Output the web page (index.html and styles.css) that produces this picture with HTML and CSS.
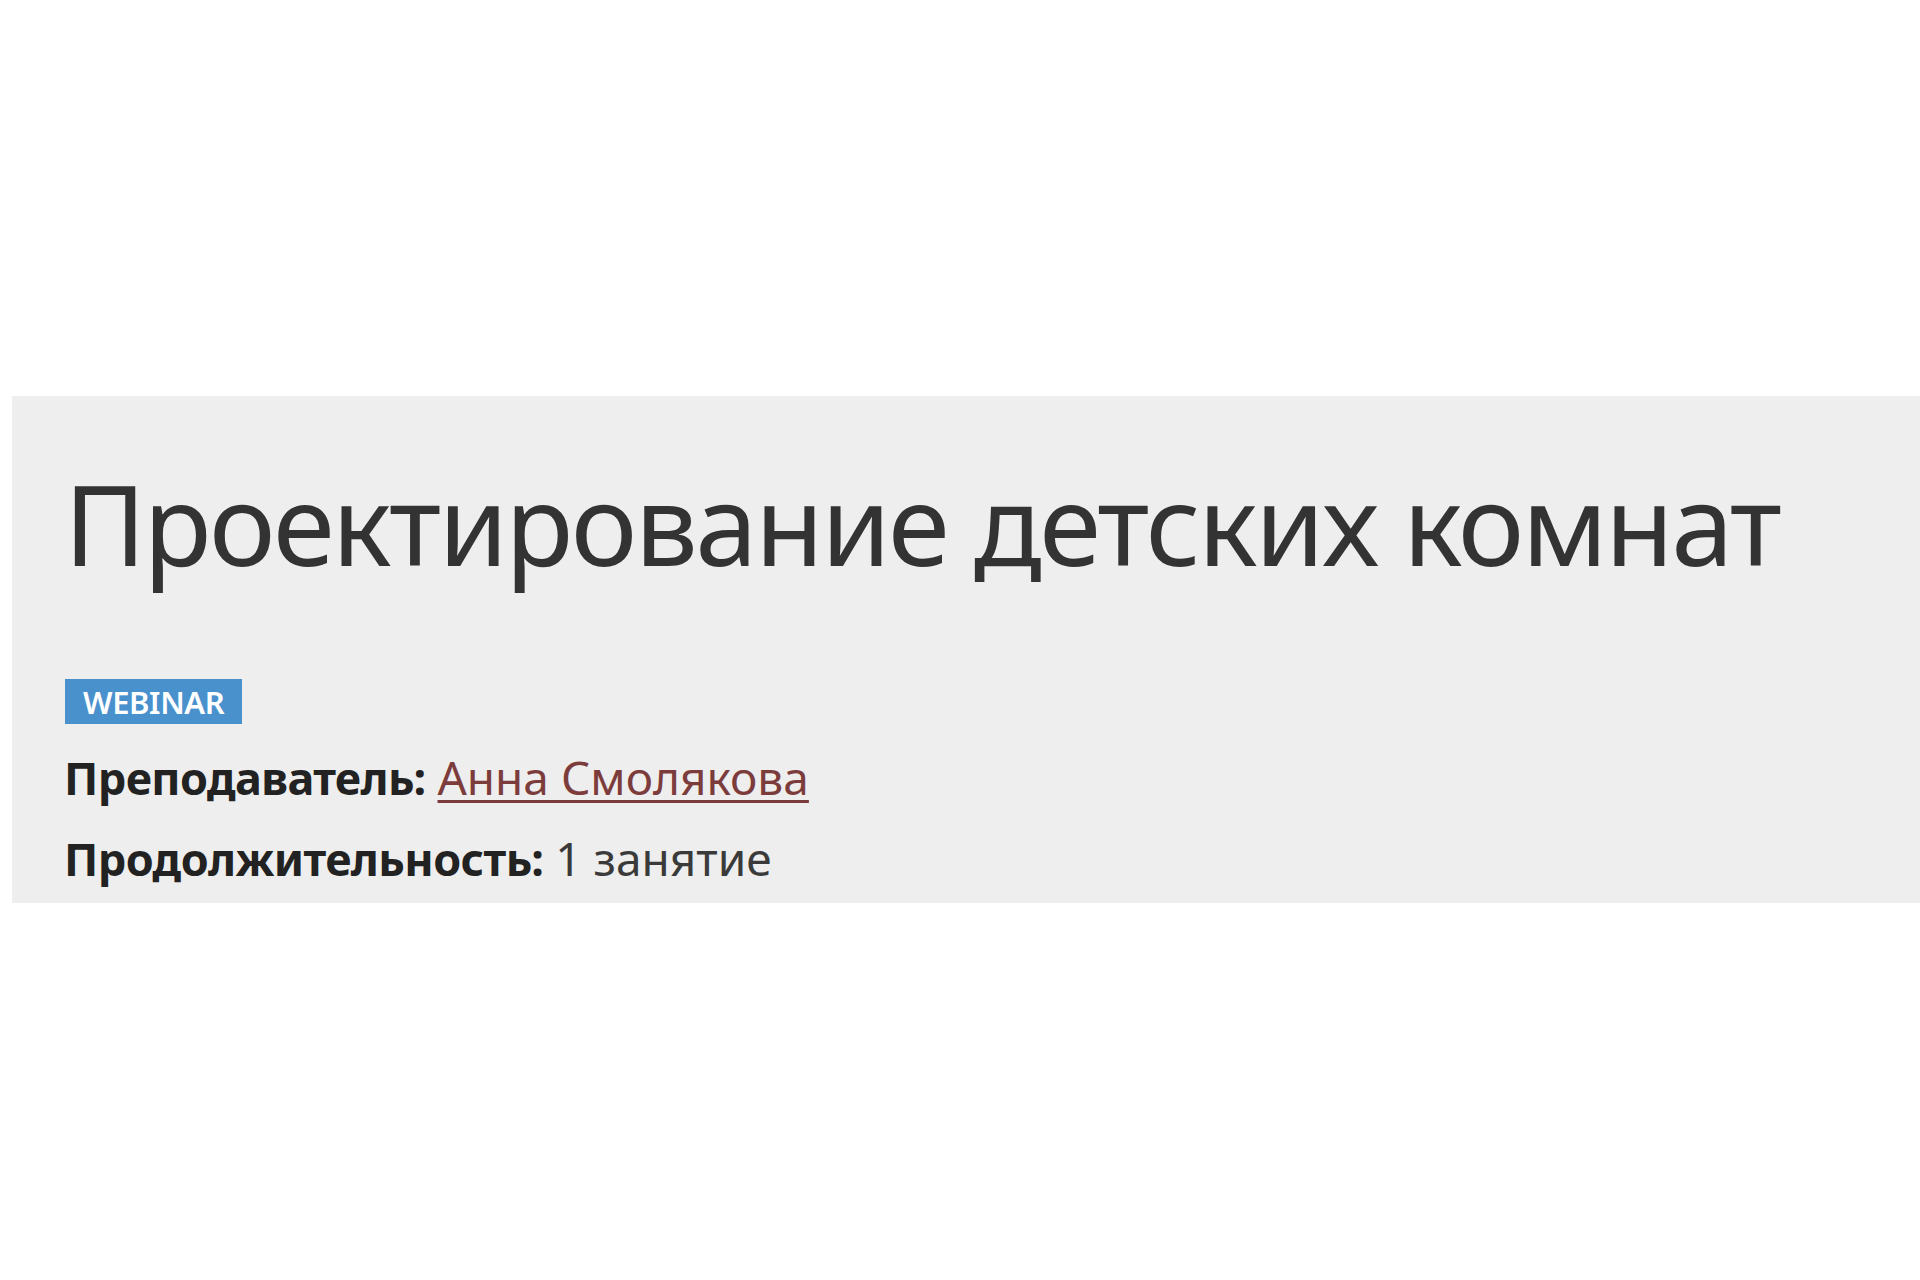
FILE: index.html
```html
<!DOCTYPE html>
<html>
<head>
  <meta charset="utf-8"/>
  <title>Проектирование детских комнат</title>
  <link rel="stylesheet" href="styles.css">
</head>
<body>

<section class="course-header">
  <h1 class="course-title">Проектирование детских комнат</h1>
  <span class="course-type">WEBINAR</span>
  <ul class="course-info">
    <li><b>Преподаватель:</b> <a href="#">Анна Смолякова</a></li>
    <li><b>Продолжительность:</b> 1 занятие</li>
  </ul>
</section>

</body>
</html>
```

FILE: styles.css
```css
body {
  margin: 0;
  background-color: #fff;
  font-family: "Noto Sans", "Open Sans", sans-serif;
  color: #333;
}
.course-header {
  margin: 396px 0 0 12px;
  padding: 60px 52px 4px;
  background-color: #eee;
}
.course-title {
  margin: 0 0 89px;
  font-size: 112px;
  font-weight: normal;
  line-height: 134px;
  letter-spacing: -2.6px;
  color: #333;
}
.course-type {
  display: inline-block;
  height: 43px;
  margin-left: 1px;
  padding: 2px 18px 0;
  background-color: #4991cd;
  color: #fff;
  font-size: 31px;
  font-weight: 600;
  line-height: 43px;
  letter-spacing: -0.4px;
  vertical-align: top;
}
.course-info {
  margin: 13px 0 0;
  padding: 0;
  list-style: none;
  font-size: 46px;
  line-height: 80px;
  color: #3a3a3a;
}
.course-info b {
  font-size: 45px;
  letter-spacing: -0.6px;
  color: #222;
}
.course-info a {
  color: #7d3c3c;
  text-decoration: underline;
  text-decoration-thickness: 3px;
  text-underline-offset: 5px;
}
```
